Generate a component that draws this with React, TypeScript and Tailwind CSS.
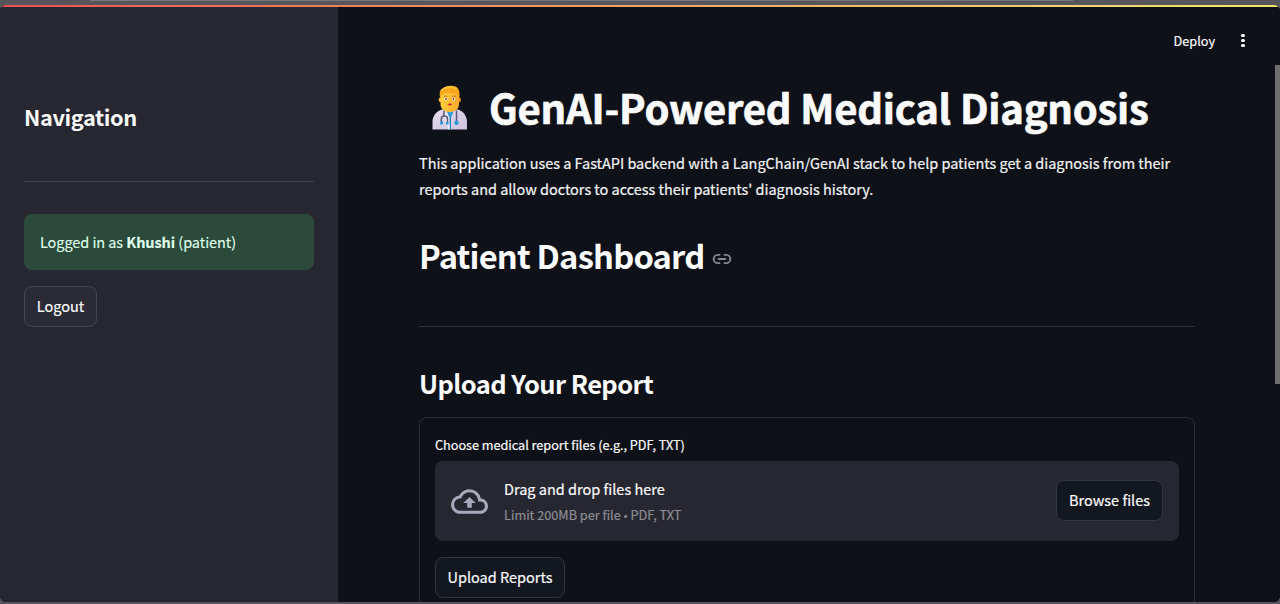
import React from "react";
import { Link2 } from "lucide-react";

function DoctorIcon() {
  return (
    <svg width="36" height="45" viewBox="0 0 36 45" className="block">
      <defs>
        <linearGradient id="coat" x1="0" y1="0" x2="1" y2="1">
          <stop offset="0" stopColor="#e6e0f0" />
          <stop offset="1" stopColor="#cdc0de" />
        </linearGradient>
        <linearGradient id="skin" x1="0" y1="0" x2="1" y2="0">
          <stop offset="0" stopColor="#ffcf3a" />
          <stop offset="1" stopColor="#f8a92c" />
        </linearGradient>
      </defs>
      <path d="M12 19h12v9H12z" fill="#eda125" />
      <path d="M.5 44.5V37c0-6.500 4.500-11.500 11-12.700L18 27l6-2.700C31 25.500 35 30.500 35 37v7.500z" fill="url(#coat)" />
      <path d="M14.500 25.500 17.500 32.500v12h1.500v-12l3-7-4 2z" fill="#299bd8" />
      <path d="M13 24.500 17 33l.8 11.500h-1.400L12 31z" fill="#f1edf7" />
      <ellipse cx="8.600" cy="14.700" rx="2" ry="2.500" fill="#fbb62f" />
      <ellipse cx="26.900" cy="14.700" rx="2" ry="2.500" fill="#f0961e" />
      <path d="M8.500 8c2-3.500 16.500-3.500 18.500 0v11c0 5.500-4.500 8-9.200 8s-9.300-2.500-9.300-8z" fill="url(#skin)" />
      <path d="M8.200 13C7 7.500 8.200 4 11 3.500 12.500.8 17.500.1 21 1.100c4.500 0 7.500 3.900 6.300 11.900L25.500 9.500C22 7.500 20 9 16 7.800 13 7.300 10.500 9 9.800 10.500z" fill="#f6a51f" />
      <path d="M10 5c4-3.500 10-3.700 14-1.500" stroke="#ffc63a" strokeWidth="1.800" fill="none" strokeLinecap="round" />
      <path d="M12 11.500q1.500-1 3 0M20.500 11.500q1.500-1 3 0" stroke="#b4681b" strokeWidth=".9" fill="none" />
      <circle cx="13.800" cy="14" r="1.500" fill="#fff" />
      <circle cx="21.700" cy="14" r="1.500" fill="#fff" />
      <circle cx="14" cy="14" r=".95" fill="#5f4250" />
      <circle cx="21.500" cy="14" r=".95" fill="#5f4250" />
      <path d="M15.500 19q2.300-.8 4.700 0-2.300 3.200-4.700 0z" fill="#c9262d" />
      <path d="M12 25.500v5M9.300 38v-4c0-4 6.200-4 6.200 0v4.500M24.500 25.500V37" stroke="#5c5978" strokeWidth="1.500" fill="none" />
      <path d="M8.300 36.500h2.700v3H8.300zM14 37h2.500v2.500H14z" fill="#239be0" />
      <circle cx="24.500" cy="37.700" r="2.200" fill="#299bd8" />
      <path d="M18.500 33v11.500" stroke="#197cc0" strokeWidth=".9" />
    </svg>
  );
}

function CloudUploadIcon() {
  return (
    <svg viewBox="0 0 24 24" className="h-[37px] w-[37px] shrink-0 fill-[#a7aabb]">
      <path d="M19.350 10.040A7.490 7.490 0 0 0 12 4C9.110 4 6.600 5.640 5.350 8.040A5.994 5.994 0 0 0 0 14c0 3.310 2.690 6 6 6h13c2.760 0 5-2.240 5-5 0-2.640-2.050-4.780-4.650-4.960zM19 18H6c-2.210 0-4-1.790-4-4 0-2.050 1.530-3.760 3.560-3.970l1.070-.11.5-.95A5.469 5.469 0 0 1 12 6c2.620 0 4.880 1.860 5.390 4.430l.3 1.500 1.530.110A2.980 2.980 0 0 1 22 15c0 1.650-1.350 3-3 3zM8 13h2.550v3h2.900v-3H16l-4-4-4 4z" />
    </svg>
  );
}

function Button({ children, className }: { children: React.ReactNode; className: string }) {
  return (
    <button className={`flex h-[41px] shrink-0 items-center justify-center rounded-lg border pb-0.5 text-[14.500px] whitespace-nowrap [-webkit-text-stroke:0.2px] ${className}`}>
      {children}
    </button>
  );
}

function Sidebar() {
  return (
    <aside className="flex w-[338px] shrink-0 flex-col items-start bg-[#272731] px-6 pt-[94px]">
      <h2 className="h-8 text-[21.800px] leading-8 font-semibold tracking-[-0.4px]">Navigation</h2>
      <hr className="mt-12 w-[290px] border-[#41424b]" />
      <div className="mt-8 flex h-14 w-[290px] items-center rounded-lg bg-[#2b4a3b] px-4 text-[14.500px] tracking-[-0.07px] text-[#dffde9] [-webkit-text-stroke:0.15px]">
        <p>
          Logged in as <strong className="font-semibold">Khushi</strong> (patient)
        </p>
      </div>
      <Button className="mt-4 w-[73px] border-[#44454e] bg-[#2b2b36]">Logout</Button>
    </aside>
  );
}

function Uploader() {
  return (
    <section className="mt-[12px] h-[220px] w-[776px] shrink-0 rounded-lg border border-[#2a2d35] px-[15px] pt-[15px]">
      <label className="block h-6 text-[12.700px] leading-6 tracking-[-0.03px] [-webkit-text-stroke:0.2px]">Choose medical report files (e.g., PDF, TXT)</label>
      <div className="mt-1 flex h-20 items-center rounded-lg bg-[#272731] px-4">
        <CloudUploadIcon />
        <div className="ml-4 grow pt-[3px] [-webkit-text-stroke:0.2px]">
          <p className="text-[14.500px] leading-[26px]">Drag and drop files here</p>
          <p className="text-[12.700px] leading-[26px] text-[#8c8d93]">
            Limit 200MB per file
            <span className="px-[3px] font-['Liberation_Sans',sans-serif] text-[10.500px]">•</span>
            PDF, TXT
          </p>
        </div>
        <Button className="mb-px w-[107px] border-[#34363e] bg-[#131720]">Browse files</Button>
      </div>
      <Button className="mt-4 w-[130px] border-[#34363e] bg-[#131720]">Upload Reports</Button>
    </section>
  );
}

function Main() {
  return (
    <main className="flex grow flex-col bg-[#0e1118]">
      <header className="flex h-[58px] shrink-0 items-center justify-end gap-[26px] pt-[9px] pr-[35px]">
        <span className="text-[12.700px] [-webkit-text-stroke:0.2px]">Deploy</span>
        <span className="flex w-1 flex-col gap-[1.500px]">
          <i className="h-[3.500px] w-[3.500px] rounded-full bg-[#fafafa]" />
          <i className="h-[3.500px] w-[3.500px] rounded-full bg-[#fafafa]" />
          <i className="h-[3.500px] w-[3.500px] rounded-full bg-[#fafafa]" />
        </span>
      </header>
      <div className="flex grow justify-between">
        <div className="ml-[81px] flex w-[776px] flex-col">
          <h1 className="mt-[9px] flex h-[66px] shrink-0 items-center gap-[21px] pl-[13px] text-[40px] leading-[66px] font-bold tracking-[-0.2px] whitespace-nowrap">
            <DoctorIcon />
            <span className="[-webkit-text-stroke:0.7px]">GenAI-Powered Medical Diagnosis</span>
          </h1>
          <p className="mt-[10px] text-[14.500px] leading-[26px] tracking-[-0.03px] whitespace-nowrap text-[#f3f4f5] [-webkit-text-stroke:0.2px]">
            This application uses a FastAPI backend with a LangChain/GenAI stack to help patients get a diagnosis from their
            <br />
            reports and allow doctors to access their patients' diagnosis history.
          </p>
          <div className="mt-[28px] flex h-[50px] shrink-0 items-center gap-2">
            <h2 className="-mt-px text-[32.700px] leading-[50px] font-semibold tracking-[-0.8px] whitespace-nowrap">Patient Dashboard</h2>
            <Link2 size={20} strokeWidth={2.3} className="mt-[7px] text-[#85878b]" />
          </div>
          <hr className="mt-[46px] border-[#2c2f37]" />
          <h3 className="mt-[36px] mb-[2px] h-10 shrink-0 text-[25.500px] leading-10 font-semibold tracking-[-0.6px]">Upload Your Report</h3>
          <Uploader />
        </div>
        <div className="h-[319px] w-[5px] bg-[#6e6e6e]" />
      </div>
    </main>
  );
}

export default function App() {
  return (
    <div className="flex h-[604px] w-[1280px] flex-col overflow-hidden bg-[#55555b] pb-[2px] font-['Noto_Sans_CJK_SC',sans-serif] text-[#fafafa]">
      <div className="flex h-[5px] shrink-0 items-start pl-[90px]">
        <div className="h-px w-[983px] bg-[#77777b]" />
      </div>
      <div className="flex h-[597px] shrink-0 flex-col overflow-hidden rounded-[6px] bg-[#0e1118]">
        <div className="h-[2px] shrink-0 bg-linear-to-r from-[#eb5151] to-[#eeea70]" />
        <div className="flex h-[595px] overflow-hidden">
          <Sidebar />
          <Main />
        </div>
      </div>
    </div>
  );
}
